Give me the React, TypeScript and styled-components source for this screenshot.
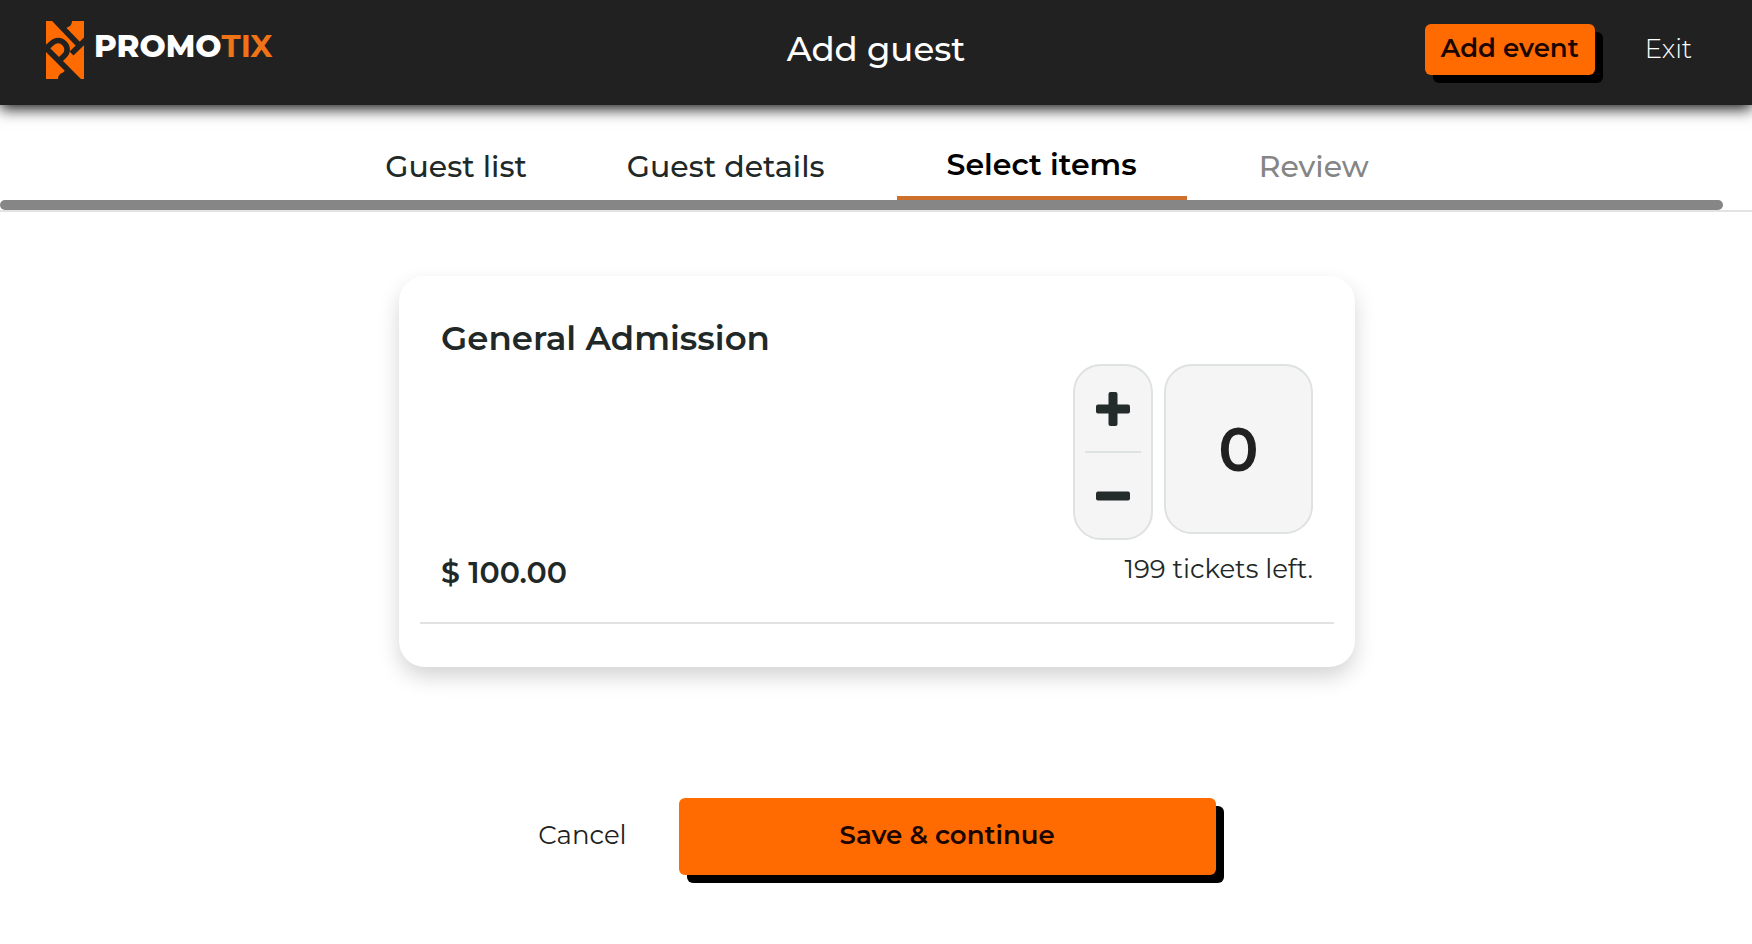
import React, { useState } from "react";
import styled, { createGlobalStyle } from "styled-components";

const ORANGE = "#ff6b00";
const INK = "#212828";
const LINE = "#dfe2e2";

const GlobalStyle = createGlobalStyle`
  *, *::before, *::after { box-sizing: border-box; }
  body {
    margin: 0;
    background: #fff;
    color: ${INK};
    font-family: Montserrat, Inter, "Open Sans", sans-serif;
  }
  button, input { font-family: inherit; margin: 0; }
`;

const Header = styled.header`
  position: relative;
  z-index: 1;
  display: grid;
  grid-template-columns: 1fr auto 1fr;
  align-items: center;
  height: 105px;
  padding: 0 46px 6px;
  background: #212121;
  color: #fff;
  box-shadow: 0 4px 14px rgba(0, 0, 0, 0.9);
`;

const Brand = styled.a`
  display: flex;
  align-items: center;
  gap: 10px;
  justify-self: start;
  text-decoration: none;
`;

const Wordmark = styled.span`
  padding-bottom: 8px;
  font-size: 31px;
  font-weight: 800;
  line-height: 36px;
  color: #fff;
`;

const WordmarkAccent = styled.span`
  color: #f07318;
  font-weight: 700;
`;

const PageTitle = styled.h1`
  margin: 0;
  padding-bottom: 2px;
  font-size: 34px;
  font-weight: 500;
  line-height: 42px;
`;

const HeaderActions = styled.div`
  display: flex;
  align-items: center;
  justify-content: flex-end;
  gap: 50px;
  padding-right: 14px;
`;

const PrimaryButton = styled.button<{ $large?: boolean }>`
  width: ${(p) => (p.$large ? "537px" : "170px")};
  height: ${(p) => (p.$large ? "77px" : "51px")};
  padding: 0 0 4px;
  border: 0;
  border-radius: 6px;
  background: ${ORANGE};
  box-shadow: 8px 8px 0 #000;
  color: #1a0500;
  font-size: 26px;
  font-weight: 600;
  line-height: 32px;
  white-space: nowrap;
  cursor: pointer;
`;

const ExitLink = styled.a`
  padding-bottom: 2px;
  color: #fff;
  font-size: 26px;
  font-weight: 300;
  line-height: 32px;
  text-decoration: none;
`;

const Steps = styled.nav`
  padding-top: 27px;
  border-bottom: 2px solid #e3e3e3;
`;

const StepList = styled.ol`
  display: flex;
  justify-content: center;
  height: 68px;
  margin: 0;
  padding: 0 0 0 2px;
  list-style: none;
`;

const Step = styled.li<{ $active?: boolean }>`
  display: flex;
  margin: ${(p) => (p.$active ? "0 22px" : "0")};
  border-bottom: ${(p) => (p.$active ? "4px solid #cd702b" : "0")};
`;

const StepLink = styled.a<{ $state: "done" | "active" | "upcoming" }>`
  display: flex;
  align-items: center;
  padding: 2px 50px 0;
  color: ${(p) =>
    p.$state === "active" ? "#000" : p.$state === "done" ? INK : "#858585"};
  font-size: 30px;
  font-weight: ${(p) => (p.$state === "active" ? 600 : 500)};
  line-height: 36px;
  text-decoration: none;
  white-space: nowrap;
`;

const StepsScrollbar = styled.div`
  height: 10px;
  margin-right: 29px;
  border-radius: 5px;
  background: #868686;
`;

const Main = styled.main`
  display: flex;
  flex-direction: column;
  align-items: center;
  padding: 64px 24px 64px 26px;
`;

const Card = styled.section`
  width: 100%;
  max-width: 956px;
  padding: 0 21px 43px;
  border-radius: 26px;
  background: #fff;
  box-shadow: 0 10px 22px -1px rgba(0, 0, 0, 0.18);
`;

const Item = styled.article`
  padding: 41px 21px 33px;
  border-bottom: 2px solid #e2e2e2;
`;

const ItemName = styled.h2`
  margin: 0 0 5px;
  font-size: 34px;
  font-weight: 600;
  line-height: 42px;
`;

const ItemBody = styled.div`
  display: flex;
  align-items: flex-end;
  justify-content: space-between;
`;

const Price = styled.p`
  margin: 0;
  font-size: 30px;
  font-weight: 600;
  line-height: 32px;
`;

const Quantity = styled.div`
  display: flex;
  flex-direction: column;
  align-items: flex-end;
  gap: 13px;
  padding-bottom: 4px;
`;

const QuantityControls = styled.div`
  display: flex;
  align-items: flex-start;
  gap: 11px;
`;

const Stepper = styled.div`
  display: flex;
  flex-direction: column;
  width: 80px;
  height: 176px;
  padding: 0 10px;
  border: 2px solid ${LINE};
  border-radius: 28px;
  background: #f5f5f5;
`;

const StepperButton = styled.button`
  display: flex;
  flex: 1;
  align-items: center;
  justify-content: center;
  padding: 0;
  border: 0;
  background: none;
  color: #232b2b;
  cursor: pointer;

  & + & {
    border-top: 2px solid ${LINE};
  }
`;

const QuantityInput = styled.input`
  width: 149px;
  height: 170px;
  padding: 0;
  border: 2px solid ${LINE};
  border-radius: 28px;
  background: #f5f5f5;
  color: #212121;
  font-size: 60px;
  font-weight: 600;
  text-align: center;
`;

const Remaining = styled.p`
  margin: 0;
  font-size: 26px;
  font-weight: 400;
  line-height: 32px;
`;

const Actions = styled.div`
  display: flex;
  align-items: center;
  justify-content: center;
  gap: 52px;
  margin-top: 131px;
`;

const CancelButton = styled.button`
  padding: 0 0 4px;
  border: 0;
  background: none;
  color: #212121;
  font-size: 26px;
  font-weight: 400;
  line-height: 32px;
  cursor: pointer;
`;

function BrandMark() {
  return (
    <svg width="38" height="58" viewBox="0 0 38 58" aria-hidden="true">
      <rect width="38" height="58" fill={ORANGE} />
      <g fill="none" stroke="#212121" strokeWidth="5.6">
        <path d="M8 -2 L33.5 24.5" />
        <path d="M40 18.5 L25.5 32.5" />
        <path d="M-2 25 L34 61" />
        <path d="M0 27.5 L5.5 22.5 C9.5 18.5 15 18.5 18.5 22.5 C22 26 22 31 18.5 34.5 L13.5 39.5" />
      </g>
      <path d="M8 0 H26 Q26 5 21 6.5 L19 8.5 Z" fill="#212121" />
      <path d="M30 58 H12 Q12 53 17 51.5 L19 49.5 Z" fill="#212121" />
    </svg>
  );
}

function PlusIcon() {
  return (
    <svg width="34" height="34" viewBox="0 0 34 34" fill="currentColor" aria-hidden="true">
      <rect x="12.5" width="9" height="34" rx="2" />
      <rect y="12.5" width="34" height="9" rx="2" />
    </svg>
  );
}

function MinusIcon() {
  return (
    <svg width="34" height="34" viewBox="0 0 34 34" fill="currentColor" aria-hidden="true">
      <rect y="12.5" width="34" height="9" rx="2" />
    </svg>
  );
}

export default function App() {
  const available = 199;
  const [count, setCount] = useState(0);
  const update = (next: number) => setCount(Math.max(0, Math.min(available, next || 0)));

  return (
    <>
      <GlobalStyle />
      <Header>
        <Brand href="#">
          <BrandMark />
          <Wordmark>
            PROMO<WordmarkAccent>TIX</WordmarkAccent>
          </Wordmark>
        </Brand>
        <PageTitle>Add guest</PageTitle>
        <HeaderActions>
          <PrimaryButton type="button">Add event</PrimaryButton>
          <ExitLink href="#">Exit</ExitLink>
        </HeaderActions>
      </Header>
      <Steps>
        <StepList>
          <Step>
            <StepLink href="#" $state="done">Guest list</StepLink>
          </Step>
          <Step>
            <StepLink href="#" $state="done">Guest details</StepLink>
          </Step>
          <Step $active>
            <StepLink href="#" $state="active" aria-current="step">Select items</StepLink>
          </Step>
          <Step>
            <StepLink href="#" $state="upcoming">Review</StepLink>
          </Step>
        </StepList>
        <StepsScrollbar />
      </Steps>
      <Main>
        <Card>
          <Item>
            <ItemName>General Admission</ItemName>
            <ItemBody>
              <Price>$ 100.00</Price>
              <Quantity>
                <QuantityControls>
                  <Stepper>
                    <StepperButton type="button" aria-label="Add one" onClick={() => update(count + 1)}>
                      <PlusIcon />
                    </StepperButton>
                    <StepperButton type="button" aria-label="Remove one" onClick={() => update(count - 1)}>
                      <MinusIcon />
                    </StepperButton>
                  </Stepper>
                  <QuantityInput
                    type="text"
                    inputMode="numeric"
                    aria-label="General Admission quantity"
                    value={count}
                    onChange={(e) => update(parseInt(e.target.value, 10))}
                  />
                </QuantityControls>
                <Remaining>{available - count} tickets left.</Remaining>
              </Quantity>
            </ItemBody>
          </Item>
        </Card>
        <Actions>
          <CancelButton type="button">Cancel</CancelButton>
          <PrimaryButton type="button" $large>Save &amp; continue</PrimaryButton>
        </Actions>
      </Main>
    </>
  );
}
